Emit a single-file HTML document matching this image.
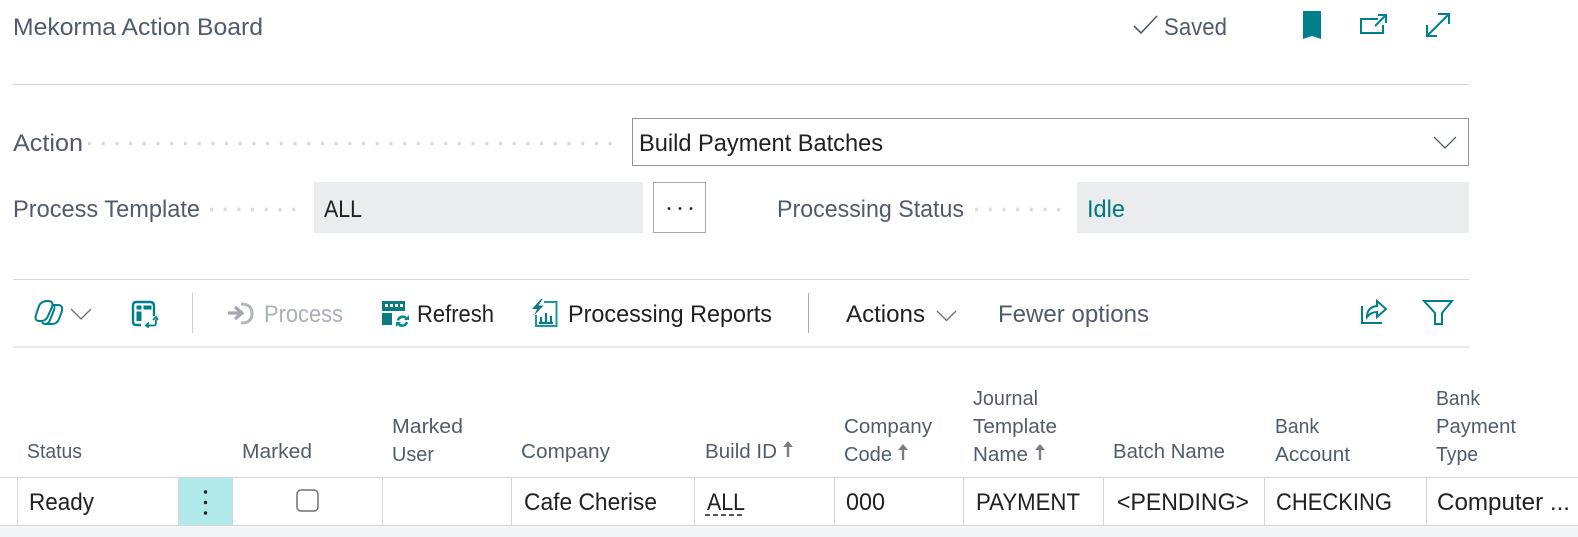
<!DOCTYPE html>
<html lang="en"><head><meta charset="utf-8"><title>Mekorma Action Board</title>
<style>
html,body{margin:0;padding:0;background:#fff;width:1578px;height:537px;overflow:hidden}
svg{display:block}
text{font-family:"Liberation Sans",sans-serif}
.t{font-size:24px;fill:#212121}
.l{font-size:24px;fill:#505c6d}
.h{font-size:20px;fill:#505c6d}
.i{fill:none;stroke:#00808a;stroke-width:2}
</style></head><body>
<svg width="1578" height="537" viewBox="0 0 1578 537" xmlns="http://www.w3.org/2000/svg">
<rect width="1578" height="537" fill="#fff"/>
<text class="l" x="13" y="35" textLength="250" lengthAdjust="spacingAndGlyphs">Mekorma Action Board</text>
<path d="M1134 26l7 7 16-17" fill="none" stroke="#505c6d" stroke-width="1.6"/>
<text class="l" x="1164" y="35" textLength="63" lengthAdjust="spacingAndGlyphs">Saved</text>
<path d="M1303 11h18v28l-9-3-9 3z" fill="#00808a"/>
<path class="i" d="M1378 19h-17v14h22v-8M1378 15h8v8M1386 15l-11 11"/>
<path class="i" d="M1427 36l22-22M1438 14h11v10M1427 25v11h10" stroke-width="2.2"/>
<line x1="13" y1="84.5" x2="1469" y2="84.5" stroke="#d4d6da"/>

<text class="l" x="13" y="151" textLength="70" lengthAdjust="spacingAndGlyphs">Action</text>
<line x1="88" y1="143.5" x2="622" y2="143.5" stroke="#d8dade" stroke-width="3.500" stroke-dasharray="3 10.7"/>
<rect x="632.5" y="118.5" width="836" height="47" fill="#fff" stroke="#8f959b"/>
<text class="t" x="639" y="151" textLength="244" lengthAdjust="spacingAndGlyphs">Build Payment Batches</text>
<path d="M1434 137l11 11 11-11" fill="none" stroke="#505c6d" stroke-width="1.3"/>

<text class="l" x="13" y="217" textLength="187" lengthAdjust="spacingAndGlyphs">Process Template</text>
<line x1="210" y1="209.5" x2="300" y2="209.5" stroke="#d8dade" stroke-width="3.500" stroke-dasharray="3 10.7"/>
<rect x="314" y="182" width="329" height="51" fill="#ebecee"/>
<text class="t" x="324" y="217" textLength="38" lengthAdjust="spacingAndGlyphs">ALL</text>
<rect x="653.5" y="182.5" width="52" height="50" fill="#fff" stroke="#a4a8ad"/>
<circle cx="669" cy="208.500" r="1.400" fill="#212121"/><circle cx="680" cy="208.500" r="1.400" fill="#212121"/><circle cx="691" cy="208.500" r="1.400" fill="#212121"/>
<text class="l" x="777" y="217" textLength="187" lengthAdjust="spacingAndGlyphs">Processing Status</text>
<line x1="975" y1="209.5" x2="1064" y2="209.5" stroke="#d8dade" stroke-width="3.500" stroke-dasharray="3 10.7"/>
<rect x="1077" y="182" width="392" height="51" fill="#ebecee"/>
<text x="1087" y="217" font-size="24" fill="#00797f" textLength="38" lengthAdjust="spacingAndGlyphs">Idle</text>

<line x1="13" y1="279.5" x2="1469" y2="279.5" stroke="#d4d6da"/>
<line x1="13" y1="347" x2="1469" y2="347" stroke="#d4d6da"/>
<path class="i" d="M45 301h3q6 0 4 6l-4 9q-2 5-7 5h-1q-6 0-4-6l3-9q2-5 9-5z"/>
<path class="i" d="M53 305h5q5 0 4 6l-3 8q-2 5-7 5h-6q-3 0-4-2M54 306q1 1 0 4l-4 10q-1 3-4 4"/>
<path d="M71 309l10 10 10-10" fill="none" stroke="#6a6f75" stroke-width="1.300"/>
<path d="M154 316v-10q0-4-4-4h-14q-3 0-3 4v15q0 4 3 4h5" fill="none" stroke="#00808a" stroke-width="2.400"/>
<rect x="136.500" y="305.500" width="5" height="4" fill="#00808a"/><rect x="143.500" y="305.500" width="8" height="4" fill="#00808a"/><rect x="136.500" y="311.500" width="5" height="9.500" fill="#00808a"/>
<path d="M146 325.500h8q2 0 2-3v-3M149 322.500l-3 3 3 2M153 320l3-3 2 3" fill="none" stroke="#00808a" stroke-width="1.800"/>
<line x1="192.5" y1="293" x2="192.5" y2="333" stroke="#c8cbd0"/>
<path d="M228 313h14M235 307l7 6-7 6" fill="none" stroke="#a5a8ac" stroke-width="3.200"/>
<path d="M241 304q11 0 11 9.500 0 9.500-11 9.500" fill="none" stroke="#b4b7bb" stroke-width="3"/>
<text x="264" y="322" font-size="24" fill="#a9b0bb" textLength="79" lengthAdjust="spacingAndGlyphs">Process</text>

<rect x="382" y="301" width="23" height="24" fill="#0b7a82"/>
<path d="M385 304h3v3h-3zM390 304h3v3h-3zM395 304h3v3h-3zM400 304h3v3h-3z" fill="#fff"/>
<rect x="382" y="311" width="23" height="2" fill="#fff"/>
<rect x="392" y="313" width="13" height="12" fill="#fff"/>
<rect x="393" y="314" width="16" height="14" fill="#fff"/>
<path d="M398 320.500a5 5 0 0 1 9-1.500M407 322a5 5 0 0 1-8.500 2" fill="none" stroke="#0b8a92" stroke-width="2.600"/>
<path d="M404 320h5v-5zM401 322h-5v5z" fill="#0b8a92"/>
<text class="t" x="417" y="322" textLength="77" lengthAdjust="spacingAndGlyphs">Refresh</text>

<path d="M544 302h12.500v24h-20.500v-11" fill="none" stroke="#1a97a2" stroke-width="2"/>
<path d="M541 299l-9 10h5l-3 6.500 9.500-10h-5l4-6.500z" fill="#0b7a82"/>
<path d="M541 322v-5M546 322v-9M551 322v-6M539 323h14" fill="none" stroke="#0b7a82" stroke-width="2.200"/>
<text class="t" x="568" y="322" textLength="204" lengthAdjust="spacingAndGlyphs">Processing Reports</text>
<line x1="808.5" y1="293" x2="808.5" y2="333" stroke="#a4acb6"/>
<text class="t" x="846" y="322" textLength="79" lengthAdjust="spacingAndGlyphs">Actions</text>
<path d="M937 311l9.500 9.500 9.500-9.500" fill="none" stroke="#6a6f75" stroke-width="1.300"/>
<text class="l" x="998" y="322" textLength="151" lengthAdjust="spacingAndGlyphs">Fewer options</text>
<path class="i" d="M1362 306v17h20"/>
<path class="i" d="M1367 317q0-10 10-11v-5l9 8-9 8v-5q-6 0-10 5z"/>
<path class="i" d="M1424 301h28l-10 12v11h-7v-11z"/>

<text class="h" x="27" y="458" textLength="55" lengthAdjust="spacingAndGlyphs">Status</text>
<text class="h" x="242" y="458" textLength="70" lengthAdjust="spacingAndGlyphs">Marked</text>
<text class="h" x="392" y="433" textLength="71" lengthAdjust="spacingAndGlyphs">Marked</text>
<text class="h" x="392" y="461" textLength="42" lengthAdjust="spacingAndGlyphs">User</text>
<text class="h" x="521" y="458" textLength="89" lengthAdjust="spacingAndGlyphs">Company</text>
<text class="h" x="705" y="458" textLength="72" lengthAdjust="spacingAndGlyphs">Build ID</text>
<path d="M788 457v-13" stroke="#7a7e83" stroke-width="2.400"/><path d="M783 447l5-6 5 6z" fill="#7a7e83"/>
<text class="h" x="844" y="433" textLength="88" lengthAdjust="spacingAndGlyphs">Company</text>
<text class="h" x="844" y="461" textLength="48" lengthAdjust="spacingAndGlyphs">Code</text>
<path d="M903 460v-12" stroke="#7a7e83" stroke-width="2.400"/><path d="M898 450l5-6 5 6z" fill="#7a7e83"/>
<text class="h" x="973" y="405" textLength="65" lengthAdjust="spacingAndGlyphs">Journal</text>
<text class="h" x="973" y="433" textLength="84" lengthAdjust="spacingAndGlyphs">Template</text>
<text class="h" x="973" y="461" textLength="55" lengthAdjust="spacingAndGlyphs">Name</text>
<path d="M1040 460v-12" stroke="#7a7e83" stroke-width="2.400"/><path d="M1035 450l5-6 5 6z" fill="#7a7e83"/>
<text class="h" x="1113" y="458" textLength="112" lengthAdjust="spacingAndGlyphs">Batch Name</text>
<text class="h" x="1275" y="433" textLength="44" lengthAdjust="spacingAndGlyphs">Bank</text>
<text class="h" x="1275" y="461" textLength="75" lengthAdjust="spacingAndGlyphs">Account</text>
<text class="h" x="1436" y="405" textLength="44" lengthAdjust="spacingAndGlyphs">Bank</text>
<text class="h" x="1436" y="433" textLength="80" lengthAdjust="spacingAndGlyphs">Payment</text>
<text class="h" x="1436" y="461" textLength="42" lengthAdjust="spacingAndGlyphs">Type</text>

<rect x="0" y="526" width="1578" height="11" fill="#f4f5f7"/>
<rect x="178" y="478" width="54" height="47" fill="#b2e9eb"/>
<g stroke="#d4d6da">
<line x1="0" y1="477.500" x2="1578" y2="477.500"/>
<line x1="0" y1="525.500" x2="1578" y2="525.500"/>
<line x1="17.500" y1="477" x2="17.500" y2="525"/>
<line x1="178.500" y1="477" x2="178.500" y2="525"/>
<line x1="232.500" y1="477" x2="232.500" y2="525"/>
<line x1="382.500" y1="477" x2="382.500" y2="525"/>
<line x1="511.500" y1="477" x2="511.500" y2="525"/>
<line x1="694.500" y1="477" x2="694.500" y2="525"/>
<line x1="834.500" y1="477" x2="834.500" y2="525"/>
<line x1="963.500" y1="477" x2="963.500" y2="525"/>
<line x1="1103.500" y1="477" x2="1103.500" y2="525"/>
<line x1="1264.500" y1="477" x2="1264.500" y2="525"/>
<line x1="1426.500" y1="477" x2="1426.500" y2="525"/>
</g>
<circle cx="205.500" cy="492" r="1.700" fill="#222"/><circle cx="205.500" cy="502.500" r="1.700" fill="#222"/><circle cx="205.500" cy="513" r="1.700" fill="#222"/>
<rect x="297" y="490" width="21" height="21" rx="4" fill="#fff" stroke="#6f7276" stroke-width="1.500"/>
<text class="t" x="29" y="510" textLength="65" lengthAdjust="spacingAndGlyphs">Ready</text>
<text class="t" x="524" y="510" textLength="133" lengthAdjust="spacingAndGlyphs">Cafe Cherise</text>
<text class="t" x="707" y="510" textLength="38" lengthAdjust="spacingAndGlyphs">ALL</text>
<path d="M705 515h40" stroke="#212121" stroke-width="1.500" stroke-dasharray="5 3"/>
<text class="t" x="846" y="510" textLength="39" lengthAdjust="spacingAndGlyphs">000</text>
<text class="t" x="976" y="510" textLength="104" lengthAdjust="spacingAndGlyphs">PAYMENT</text>
<text class="t" x="1117" y="510" textLength="132" lengthAdjust="spacingAndGlyphs">&lt;PENDING&gt;</text>
<text class="t" x="1276" y="510" textLength="116" lengthAdjust="spacingAndGlyphs">CHECKING</text>
<text class="t" x="1437" y="510" textLength="133" lengthAdjust="spacingAndGlyphs">Computer ...</text>
</svg>
</body></html>
